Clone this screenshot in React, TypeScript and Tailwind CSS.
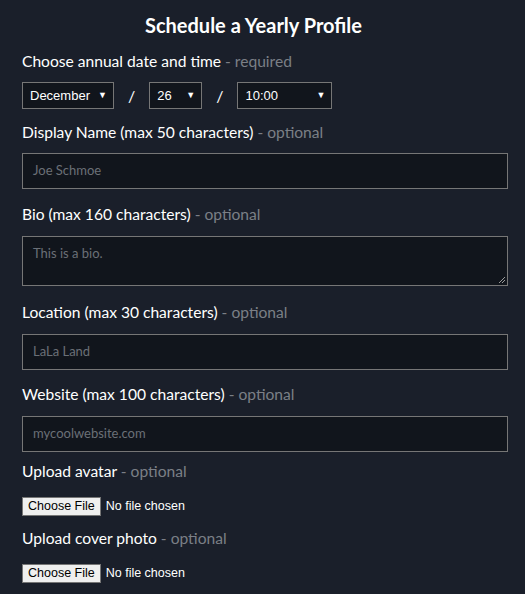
import React from "react";

const font = { fontFamily: "Lato, 'Noto Sans', sans-serif" };

function Label({ text, req }: { text: string; req?: string }) {
  return (
    <div className="text-[15.6px] leading-[20px] text-white">
      {text} <span className="text-[#7b7f86]">- {req ?? "optional"}</span>
    </div>
  );
}

function Select({ value, w }: { value: string; w: string }) {
  return (
    <div className={`relative flex h-[27px] items-center border border-[#767676] bg-[#11151c] pl-[7px] text-[13px] text-white font-['Liberation_Sans',Arial,sans-serif] ${w}`}>
      <span>{value}</span>
      <span className="absolute right-[6px] top-[7px] text-[9px] leading-[10px]">▼</span>
    </div>
  );
}

function FileInput() {
  return (
    <div className="flex items-center gap-[5px] text-[12.5px] font-['Liberation_Sans',Arial,sans-serif] text-white">
      <span className="border border-[#767676] bg-[#efefef] px-[5px] py-[1px] text-black leading-[15px]">Choose File</span>
      <span>No file chosen</span>
    </div>
  );
}

function Field({ ph }: { ph: string }) {
  return (
    <div className="flex h-[36px] items-center border border-[#767676] bg-[#11151c] px-[10px] text-[13px] text-[#6b7077]">{ph}</div>
  );
}

export default function App() {
  return (
    <div className="min-h-[594px] w-[525px] bg-[#1a1f2a] pl-[22px] pr-[17px] pt-[14px]" style={font}>
      <h1 className="mr-[23px] text-center text-[20px] font-bold leading-[22px] text-white">Schedule a Yearly Profile</h1>
      <div className="mt-[15px]">
        <Label text="Choose annual date and time" req="required" />
      </div>
      <div className="mt-[11px] flex items-center text-white">
        <Select value="December" w="w-[92px]" />
        <span className="mx-[14px] text-[16px]">/</span>
        <Select value="26" w="w-[53px]" />
        <span className="mx-[14px] text-[16px]">/</span>
        <Select value="10:00" w="w-[95px]" />
      </div>
      <div className="mt-[13px]"><Label text="Display Name (max 50 characters)" /></div>
      <div className="mt-[11px]"><Field ph="Joe Schmoe" /></div>
      <div className="mt-[15px]"><Label text="Bio (max 160 characters)" /></div>
      <div className="mt-[12px]">
        <div className="relative h-[50px] border border-[#767676] bg-[#11151c] px-[10px] pt-[8px] text-[13px] leading-[17px] text-[#6b7077]">
          This is a bio.
          <svg className="absolute bottom-[1px] right-[1px]" width="8" height="8" viewBox="0 0 8 8">
            <path d="M7 1 L1 7 M7 4 L4 7" stroke="#9a9a9a" strokeWidth="1" />
          </svg>
        </div>
      </div>
      <div className="mt-[16px]"><Label text="Location (max 30 characters)" /></div>
      <div className="mt-[12px]"><Field ph="LaLa Land" /></div>
      <div className="mt-[14px]"><Label text="Website (max 100 characters)" /></div>
      <div className="mt-[12px]"><Field ph="mycoolwebsite.com" /></div>
      <div className="mt-[9px]"><Label text="Upload avatar" /></div>
      <div className="mt-[16px]"><FileInput /></div>
      <div className="mt-[12px]"><Label text="Upload cover photo" /></div>
      <div className="mt-[16px]"><FileInput /></div>
    </div>
  );
}
